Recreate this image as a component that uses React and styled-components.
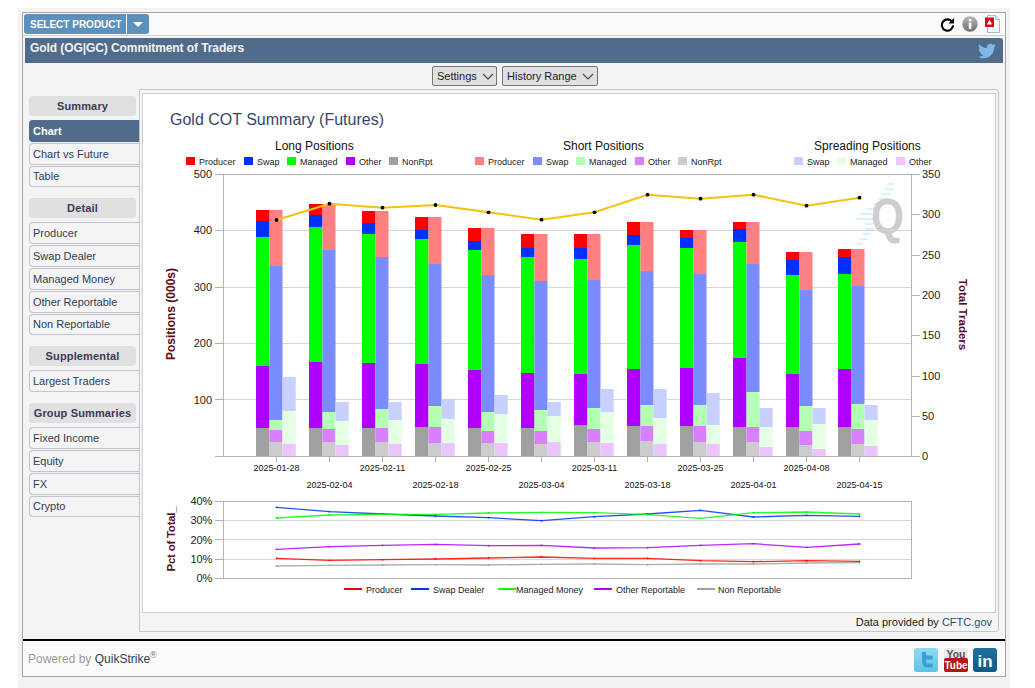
import React from "react";
import styled, { createGlobalStyle } from "styled-components";
import { FaTwitter } from "react-icons/fa";

const Global = createGlobalStyle`
  html, body { margin: 0; padding: 0; background: #fff; }
  body { font-family: "Liberation Sans", Arial, sans-serif; }
`;

const Page = styled.div`
  margin: 8px 0 0 18px;
  width: 992px;
  height: 680px;
  background: #f3f3f3;
  padding: 4px 4px 0 4px;
  box-sizing: border-box;
`;
const Frame = styled.div`
  width: 984px;
  height: 665px;
  box-sizing: border-box;
  border: 1px solid #a6a6a6;
  background: #f4f4f4;
  display: flex;
  flex-direction: column;
`;
const TopBar = styled.div`
  height: 22px;
  flex: none;
  display: flex;
  align-items: center;
  justify-content: space-between;
  padding: 0 5px 0 1px;
  background: #fafafa;
  border-bottom: 1px solid #cfcfcf;
`;
const ProductGroup = styled.div`
  display: flex;
  gap: 1px;
  height: 20px;
`;
const ProductButton = styled.button`
  border: 0;
  margin: 0;
  padding: 0 0 0 6px;
  width: 102px;
  text-align: left;
  height: 20px;
  border-radius: 3px 0 0 3px;
  background: #5c90bd;
  color: #fff;
  font: bold 10px "Liberation Sans", Arial, sans-serif;
`;
const CaretButton = styled.button`
  border: 0;
  margin: 0;
  padding: 0;
  width: 22px;
  height: 20px;
  border-radius: 0 3px 3px 0;
  background: #5c90bd;
  display: flex;
  align-items: center;
  justify-content: center;
  &::after {
    content: "";
    border-left: 5px solid transparent;
    border-right: 5px solid transparent;
    border-top: 5px solid #fff;
  }
`;
const TopIcons = styled.div`
  display: flex;
  align-items: center;
  gap: 7px;
`;
const TitleBar = styled.div`
  flex: none;
  margin: 2px 2px 0 2px;
  height: 25px;
  box-sizing: border-box;
  padding: 0 7px 5px 5px;
  background: #516b8b;
  border-radius: 0 3px 0 0;
  color: #f2f4f7;
  font-weight: bold;
  font-size: 12px;
  letter-spacing: -0.08px;
  display: flex;
  align-items: center;
  justify-content: space-between;
`;
const BirdIcon = styled(FaTwitter)`
  color: #7db8e8;
  font-size: 18px;
  margin-top: 5px;
`;
const Toolbar = styled.div`
  flex: none;
  height: 20px;
  margin-top: 3px;
  display: flex;
  justify-content: center;
  gap: 5px;
  padding-left: 2px;
`;
const ToolButton = styled.button`
  width: ${(p) => p.$w}px;
  height: 20px;
  margin: 0;
  padding: 0 0 0 4px;
  box-sizing: border-box;
  border: 1px solid #777;
  border-radius: 2px;
  background: #e0e0e0;
  color: #1a1a2a;
  font: 11px "Liberation Sans", Arial, sans-serif;
  display: flex;
  align-items: center;
  gap: 5px;
`;
const Body = styled.div`
  flex: none;
  display: flex;
  margin-top: 3px;
  height: 543px;
`;
const Side = styled.nav`
  flex: none;
  width: 116px;
  box-sizing: border-box;
  padding: 7px 0 0 6px;
  display: flex;
  flex-direction: column;
  gap: 11px;
`;
const NavGroup = styled.div`
  display: flex;
  flex-direction: column;
  gap: 1px;
`;
const NavHead = styled.div`
  width: 107px;
  height: 20px;
  margin-bottom: 3px;
  background: #e0e0e0;
  border-radius: 3px;
  color: #3a3a58;
  font-size: 11px;
  font-weight: bold;
  letter-spacing: 0.15px;
  display: flex;
  align-items: center;
  justify-content: center;
`;
const NavItem = styled.div`
  height: 21.8px;
  box-sizing: border-box;
  padding-left: 3px;
  border: 1px solid ${(p) => (p.$active ? "#516b8b" : "#c2c5d0")};
  border-right: 0;
  border-radius: 4px 0 0 4px;
  background: ${(p) => (p.$active ? "#516b8b" : "#f4f4f4")};
  color: ${(p) => (p.$active ? "#fff" : "#2f3c58")};
  font-size: 11px;
  font-weight: ${(p) => (p.$active ? "bold" : "normal")};
  display: flex;
  align-items: center;
`;
const Panel = styled.main`
  flex: none;
  width: 860px;
  height: 543px;
  box-sizing: border-box;
  border: 1px solid #c3c6d2;
  border-radius: 0 3px 3px 0;
  padding: 3px 2px 0 2px;
  display: flex;
  flex-direction: column;
`;
const ChartBox = styled.div`
  flex: none;
  height: 520px;
  box-sizing: border-box;
  border: 1px solid #cfcfcf;
  background: #fff;
`;
const ChartSvg = styled.svg`
  display: block;
  font-family: "Liberation Sans", Arial, sans-serif;
`;
const Credit = styled.div`
  flex: 1;
  display: flex;
  align-items: center;
  justify-content: flex-end;
  gap: 3px;
  padding: 0 4px 0 0;
  font-size: 11px;
  color: #222;
`;
const Link = styled.span`
  color: #2b4a70;
`;
const Footer = styled.footer`
  flex: none;
  margin-top: 7px;
  height: 37px;
  box-sizing: border-box;
  border-top: 2px solid #000;
  background: #fafafa;
  display: flex;
  align-items: center;
  justify-content: space-between;
  padding: 0 8px 0 5px;
`;
const Powered = styled.div`
  font-size: 12px;
  color: #9a9a9a;
  sup { font-size: 9px; line-height: 0; color: #777; }
`;
const Brand = styled.span`
  color: #2b4060;
`;
const Socials = styled.div`
  display: flex;
  gap: 5.5px;
  margin-top: 3px;
`;

const ChartTitle = styled.text`
  font-size: 16px;
  fill: #36466a;
`;
const GroupTitle = styled.text`
  font-size: 12px;
  fill: #111;
`;
const LegendText = styled.text`
  font-size: 9px;
  fill: #222;
`;
const AxisText = styled.text`
  font-size: 11px;
  fill: #222;
`;
const DateText = styled.text`
  font-size: 9px;
  fill: #111;
`;
const AxisTitle = styled.text`
  font-size: ${(p) => p.$size || 12}px;
  font-weight: bold;
  fill: #5a0d14;
`;
const GridLine = styled.line`
  stroke: #d6d6d6;
  stroke-width: 1;
`;
const AxisLine = styled.line`
  stroke: #b2b2b2;
  stroke-width: 1;
`;

const LONG = ["#ff0000", "#0030ff", "#00ff00", "#b000ff", "#a0a0a0"];
const SHORT = ["#ff8080", "#7a8cff", "#b3ffb3", "#d980ff", "#cccccc"];
const SPREAD = ["#c8d0ff", "#e5ffe5", "#ecc4ff"];

const GX = [256, 309, 362, 415, 468, 521, 574, 627, 680, 733, 786, 838];
const BASE = 456;
// pixel tops, from the bottom segment up
const LONGS = [
  [428, 366, 237, 221, 210], [428, 362, 227, 215, 204], [428, 363, 234, 223, 211], [427, 364, 239, 230, 217],
  [428, 370, 250, 241, 228], [428, 373, 257, 248, 234], [425, 374, 259, 248, 234], [426, 369, 245, 235, 222],
  [426, 368, 248, 238, 230], [427, 358, 242, 229, 222], [427, 374, 275, 260, 252], [427, 369, 274, 257, 249],
];
const SHORTS = [
  [442, 430, 420, 266, 210], [442, 429, 412, 250, 204], [442, 428, 409, 257, 211], [443, 427, 406, 264, 217],
  [443, 431, 412, 275, 228], [444, 431, 410, 281, 234], [442, 429, 408, 280, 234], [441, 426, 405, 271, 222],
  [442, 426, 405, 274, 230], [442, 427, 392, 264, 222], [445, 431, 406, 290, 252], [444, 429, 404, 286, 249],
];
const SPREADS = [
  [444, 411, 377], [445, 421, 402], [444, 420, 402], [443, 419, 399], [443, 414, 395], [442, 416, 402],
  [443, 412, 389], [444, 418, 389], [444, 425, 393], [447, 427, 408], [449, 424, 408], [446, 420, 405],
];
const PX = [276.5, 329.5, 382.5, 435.5, 488.5, 541.5, 594.5, 647.5, 700.5, 753.5, 806.5, 859.5];
const TRADERS = [220, 203.7, 207.7, 205, 212.3, 219.7, 212.3, 194.7, 198.7, 194.7, 205.7, 197.7];
const DATES = ["2025-01-28", "2025-02-04", "2025-02-11", "2025-02-18", "2025-02-25", "2025-03-04", "2025-03-11", "2025-03-18", "2025-03-25", "2025-04-01", "2025-04-08", "2025-04-15"];
const PCT = [
  { c: "#0030ff", y: [507.3, 511.7, 514, 516, 517.7, 520.7, 516.7, 514, 510.3, 517, 515.3, 516.3] },
  { c: "#00ff00", y: [518, 515, 514.3, 514.3, 513, 512.3, 512.7, 514.7, 518.3, 512.7, 512, 514] },
  { c: "#b000ff", y: [549.3, 546.7, 545.3, 544.3, 545.7, 545.3, 548, 547.7, 545.3, 543.7, 547.3, 544] },
  { c: "#ff0000", y: [558.3, 560.3, 559.7, 559, 558, 557, 558.3, 558.3, 560.7, 561.7, 560.7, 561.3] },
  { c: "#a0a0a0", y: [566, 565.3, 565, 564.7, 565, 564.3, 564, 564.7, 564, 564, 563, 562.7] },
];
const LEGEND = [
  [186, "Producer", LONG[0]], [244, "Swap", LONG[1]], [287, "Managed", LONG[2]], [346, "Other", LONG[3]], [389, "NonRpt", LONG[4]],
  [475, "Producer", SHORT[0]], [533, "Swap", SHORT[1]], [576, "Managed", SHORT[2]], [635, "Other", SHORT[3]], [678, "NonRpt", SHORT[4]],
  [794, "Swap", SPREAD[0]], [837, "Managed", SPREAD[1]], [896, "Other", SPREAD[2]],
];
const PCT_LEGEND = [
  [344, 366, "Producer", "#ff0000"], [411, 433, "Swap Dealer", "#0030ff"], [498, 516, "Managed Money", "#00ff00"],
  [594, 616, "Other Reportable", "#b000ff"], [697, 718, "Non Reportable", "#a0a0a0"],
];
const STRIPES = [
  [888, 183, 6], [885, 188, 8], [882, 193, 8], [878, 198, 9], [873, 203, 8], [867, 208, 9], [860, 213, 12], [856, 218, 17],
  [865, 223, 8], [865, 228, 9], [863, 233, 7], [860, 238, 7], [857, 243, 6],
];

function Stack({ x, w, tops, colors }) {
  return tops.map((t, i) => (
    <rect key={i} x={x} y={t} width={w} height={(i === 0 ? BASE : tops[i - 1]) - t} fill={colors[colors.length - 1 - i]} />
  ));
}

function Chart() {
  return (
    <ChartSvg width="851" height="518" viewBox="143 94 851 518">
      <ChartTitle x="170" y="125">Gold COT Summary (Futures)</ChartTitle>
      <GroupTitle x="275" y="150">Long Positions</GroupTitle>
      <GroupTitle x="563" y="150">Short Positions</GroupTitle>
      <GroupTitle x="814" y="150">Spreading Positions</GroupTitle>
      {LEGEND.map(([x, label, c]) => (
        <g key={x}>
          <rect x={x} y="157" width="9" height="8" fill={c} />
          <LegendText x={x + 13} y="165">{label}</LegendText>
        </g>
      ))}

      {STRIPES.map(([x, y, w]) => (
        <rect key={y} x={x} y={y} width={w} height="2" fill="#d4f3fb" />
      ))}
      <text transform="translate(871 234) scale(.85 1)" fontSize="50" fontWeight="bold" fill="#cdcdcd">Q</text>

      {[230.5, 287.5, 343.5, 399.5].map((y) => <GridLine key={y} x1="223" x2="912" y1={y} y2={y} />)}
      <AxisLine x1="215" x2="912" y1="174.5" y2="174.5" />
      <AxisLine x1="215" x2="912" y1="456.5" y2="456.5" />
      <AxisLine x1="223.5" x2="223.5" y1="174" y2="456" />
      <AxisLine x1="911.5" x2="911.5" y1="174" y2="456" />
      {[230.5, 287.5, 343.5, 399.5].map((y) => <AxisLine key={y} x1="215" x2="223" y1={y} y2={y} />)}
      {[500, 400, 300, 200, 100].map((v, i) => (
        <AxisText key={v} x="212" y={178 + i * 56.4} textAnchor="end">{v}</AxisText>
      ))}
      {[350, 300, 250, 200, 150, 100, 50, 0].map((v, i) => (
        <g key={v}>
          <AxisLine x1="912" x2="920" y1={Math.round(174 + i * 40.3) + 0.5} y2={Math.round(174 + i * 40.3) + 0.5} />
          <AxisText x="922" y={178 + i * 40.3}>{v}</AxisText>
        </g>
      ))}

      {GX.map((x, i) => (
        <g key={x}>
          <Stack x={x} w={13.5} tops={LONGS[i]} colors={LONG} />
          <Stack x={x + 13.5} w={13} tops={SHORTS[i]} colors={SHORT} />
          <Stack x={x + 26.5} w={13.2} tops={SPREADS[i]} colors={SPREAD} />
          <AxisLine x1={Math.floor(PX[i]) + 0.5} x2={Math.floor(PX[i]) + 0.5} y1="456" y2="462" />
          <DateText x={PX[i]} y={i % 2 ? 488 : 471} textAnchor="middle">{DATES[i]}</DateText>
        </g>
      ))}

      <polyline points={PX.map((x, i) => `${x},${TRADERS[i]}`).join(" ")} fill="none" stroke="#f4c20d" strokeWidth="2" />
      {PX.map((x, i) => <circle key={x} cx={x} cy={TRADERS[i]} r="1.9" fill="#000" />)}

      <AxisTitle x="175" y="314" textAnchor="middle" transform="rotate(-90 175 314)">Positions (000s)</AxisTitle>
      <AxisTitle x="959" y="314.5" $size={11.5} textAnchor="middle" transform="rotate(90 959 314.5)">Total Traders</AxisTitle>

      {[520.5, 539.5, 559.5].map((y) => <GridLine key={y} x1="223" x2="912" y1={y} y2={y} />)}
      <AxisLine x1="223" x2="912" y1="501.5" y2="501.5" />
      <AxisLine x1="215" x2="912" y1="578.5" y2="578.5" />
      <AxisLine x1="223.5" x2="223.5" y1="501" y2="578" />
      <AxisLine x1="911.5" x2="911.5" y1="501" y2="579" />
      {[501.5, 520.5, 539.5, 559.5].map((y) => <AxisLine key={y} x1="215" x2="223" y1={y} y2={y} />)}
      {["40%", "30%", "20%", "10%", "0%"].map((v, i) => (
        <AxisText key={v} x="212" y={505 + i * 19.3} textAnchor="end" letterSpacing="-0.2">{v}</AxisText>
      ))}
      {PCT.map((s) => (
        <g key={s.c}>
          <polyline points={PX.map((x, i) => `${x},${s.y[i]}`).join(" ")} fill="none" stroke={s.c} strokeWidth="1.3" strokeOpacity="0.85" />
          {PX.map((x, i) => <circle key={x} cx={x} cy={s.y[i]} r="0.9" fill={s.c} />)}
        </g>
      ))}
      <AxisTitle x="175" y="539" $size={11.5} textAnchor="middle" letterSpacing="-0.25" transform="rotate(-90 175 539)">Pct of Total_</AxisTitle>

      {PCT_LEGEND.map(([x, tx, label, c]) => (
        <g key={label}>
          <rect x={x} y="588" width="18" height="2" fill={c} />
          <LegendText x={tx} y="593">{label}</LegendText>
        </g>
      ))}
    </ChartSvg>
  );
}

const Chevron = () => (
  <svg width="12" height="7" viewBox="0 0 12 7"><path d="M1 1l5 5 5-5" fill="none" stroke="#444" strokeWidth="1.1" /></svg>
);

const RefreshIcon = () => (
  <svg width="15" height="15" viewBox="0 0 16 16">
    <path d="M13 5.2A6 6 0 1 0 14 9" fill="none" stroke="#000" strokeWidth="2.2" />
    <path d="M15 1v6H9z" fill="#000" />
  </svg>
);
const InfoIcon = () => (
  <svg width="16" height="16" viewBox="0 0 16 16">
    <defs>
      <linearGradient id="infoGrad" x1="0" y1="0" x2="0" y2="1">
        <stop offset="0" stopColor="#b5b5b5" /><stop offset="1" stopColor="#707070" />
      </linearGradient>
    </defs>
    <circle cx="8" cy="8" r="7.7" fill="url(#infoGrad)" />
    <rect x="6.8" y="3" width="2.6" height="2.4" fill="#fff" />
    <rect x="6.8" y="6.5" width="2.6" height="6.5" fill="#fff" />
  </svg>
);
const PdfIcon = () => (
  <svg width="15" height="18" viewBox="0 0 15 18">
    <path d="M2.5.5h8l4 4v13h-12z" fill="#fff" stroke="#a9bcc4" />
    <path d="M10.5.5v4h4" fill="#e6eef0" stroke="#a9bcc4" />
    <rect x="0" y="2.5" width="9" height="9.5" fill="#d30f17" />
    <path d="M4.5 4.5L7 9.5H2z" fill="#fff" />
  </svg>
);
const TwitterTile = () => (
  <svg width="24" height="24" viewBox="0 0 24 24">
    <defs>
      <linearGradient id="tw" x1="0" y1="0" x2="0" y2="1">
        <stop offset="0" stopColor="#8fdcf0" /><stop offset="1" stopColor="#5cc3e6" />
      </linearGradient>
    </defs>
    <rect width="24" height="24" rx="2.5" fill="url(#tw)" />
    <path d="M10 4v9.5q0 4 4 4h4.5M10 9.5h8.5" fill="none" stroke="#3a9fd4" strokeWidth="4" />
  </svg>
);
const YoutubeTile = () => (
  <svg width="24" height="24" viewBox="0 0 24 24">
    <rect width="24" height="11" rx="2" fill="#e9e9e9" />
    <rect y="10" width="24" height="14" rx="2" fill="#b81316" />
    <text x="12" y="9.5" fontSize="10.5" fontWeight="bold" fontFamily="Liberation Sans" textAnchor="middle" fill="#555">You</text>
    <text x="12" y="21" fontSize="10" fontWeight="bold" fontFamily="Liberation Sans" textAnchor="middle" fill="#fff">Tube</text>
  </svg>
);
const LinkedinTile = () => (
  <svg width="24" height="24" viewBox="0 0 24 24">
    <defs>
      <linearGradient id="li" x1="0" y1="0" x2="0" y2="1">
        <stop offset="0" stopColor="#1f6f9c" /><stop offset="1" stopColor="#0f5a84" />
      </linearGradient>
    </defs>
    <rect width="24" height="24" rx="3" fill="url(#li)" />
    <text x="12" y="18.5" fontSize="17" fontWeight="bold" fontFamily="Liberation Sans" textAnchor="middle" fill="#fff">in</text>
  </svg>
);

const NAV = [
  ["Summary", ["Chart", "Chart vs Future", "Table"]],
  ["Detail", ["Producer", "Swap Dealer", "Managed Money", "Other Reportable", "Non Reportable"]],
  ["Supplemental", ["Largest Traders"]],
  ["Group Summaries", ["Fixed Income", "Equity", "FX", "Crypto"]],
];

export default function App() {
  return (
    <>
      <Global />
      <Page>
        <Frame>
          <TopBar>
            <ProductGroup>
              <ProductButton>SELECT PRODUCT</ProductButton>
              <CaretButton aria-label="Open" />
            </ProductGroup>
            <TopIcons>
              <RefreshIcon />
              <InfoIcon />
              <PdfIcon />
            </TopIcons>
          </TopBar>
          <TitleBar>
            <span>Gold (OG|GC) Commitment of Traders</span>
            <BirdIcon />
          </TitleBar>
          <Toolbar>
            <ToolButton $w={65}>Settings <Chevron /></ToolButton>
            <ToolButton $w={96}>History Range <Chevron /></ToolButton>
          </Toolbar>
          <Body>
            <Side>
              {NAV.map(([head, items]) => (
                <NavGroup key={head}>
                  <NavHead>{head}</NavHead>
                  {items.map((it) => <NavItem key={it} $active={it === "Chart"}>{it}</NavItem>)}
                </NavGroup>
              ))}
            </Side>
            <Panel>
              <ChartBox><Chart /></ChartBox>
              <Credit>Data provided by <Link>CFTC.gov</Link></Credit>
            </Panel>
          </Body>
          <Footer>
            <Powered>Powered by <Brand>QuikStrike</Brand><sup>®</sup></Powered>
            <Socials>
              <TwitterTile />
              <YoutubeTile />
              <LinkedinTile />
            </Socials>
          </Footer>
        </Frame>
      </Page>
    </>
  );
}
